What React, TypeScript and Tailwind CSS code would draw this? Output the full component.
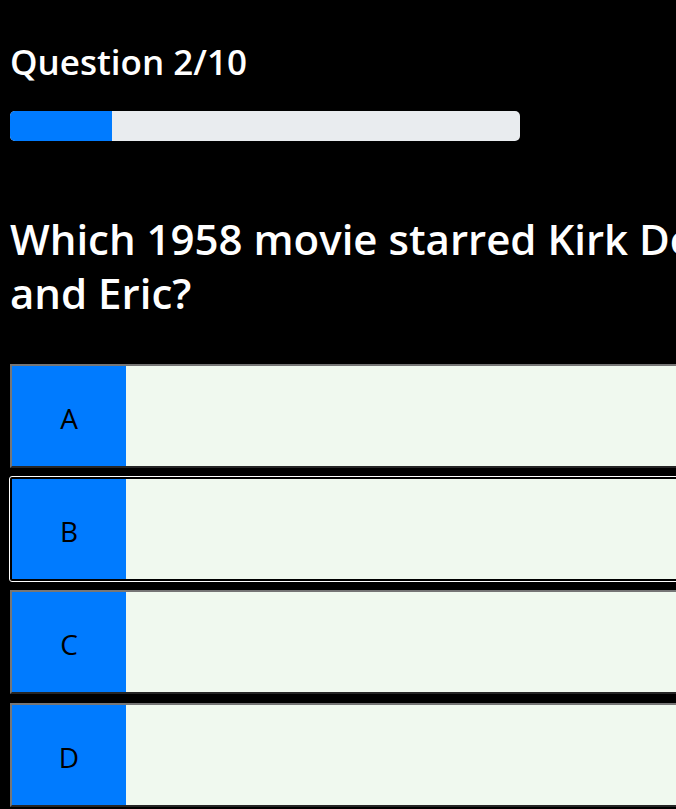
import React from "react";

const options = ["A", "B", "C", "D"];

export default function App() {
  return (
    <div
      className="h-[809px] w-full overflow-hidden bg-black px-[10px]"
      style={{ fontFamily: '"Open Sans", "Noto Sans", sans-serif' }}
    >
      <h2 className="pt-[39px] text-[35px] font-semibold leading-[46px] text-white">Question 2/10</h2>

      <div className="mt-[26px] h-[30px] w-[510px] overflow-hidden rounded-[5px] bg-[#e9ecef]">
        <div className="h-full w-[20%] bg-[#007bff]" />
      </div>

      <h1 className="mt-[71px] w-[1000px] text-[42px] font-semibold leading-[54px] text-white">
        <span className="whitespace-nowrap">Which 1958 movie starred Kirk Douglas as Einar</span>
        <br />
        <span className="whitespace-nowrap">and Eric?</span>
      </h1>

      <div className="mt-[44px] flex w-[900px] flex-col gap-[9px]">
        {options.map((letter) => (
          <button
            key={letter}
            className={
              "flex h-[104px] w-full border-2 bg-[#f0f9ef] text-left " +
              (letter === "B"
                ? "rounded-[2px] border-black outline outline-1 outline-white"
                : "border-t-[#767676] border-l-[#767676] border-b-[#262626] border-r-[#262626]")
            }
          >
            <span className="flex h-full w-[114px] items-center justify-center bg-[#007bff] pt-[4px] text-[28px] text-black">
              {letter}
            </span>
          </button>
        ))}
      </div>
    </div>
  );
}
